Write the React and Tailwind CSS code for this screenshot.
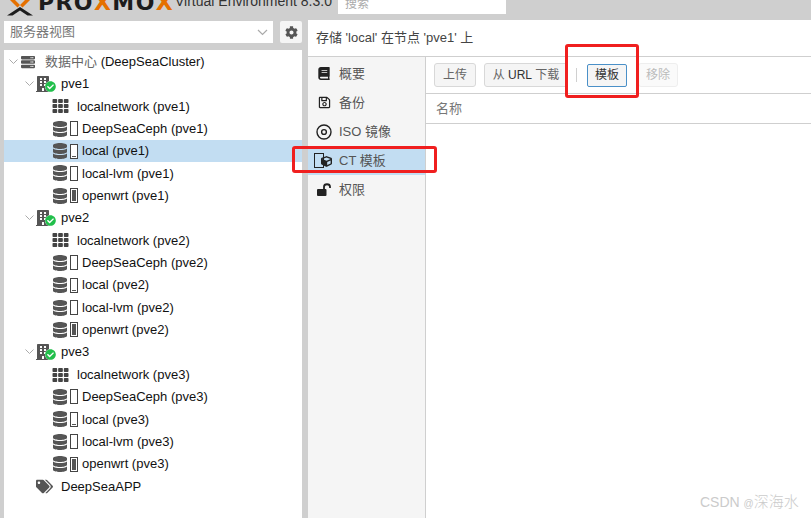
import React from "react";
import { FaBook, FaBuilding, FaCheckCircle, FaCog, FaCube, FaDatabase, FaRegSave, FaServer, FaTags, FaTh } from "react-icons/fa";

const sans = "font-['Liberation_Sans','Noto_Sans_CJK_SC',sans-serif]";

function Chevron() {
  return (
    <svg width="9" height="6" viewBox="0 0 9 6" className="shrink-0 text-[#aaa]">
      <path d="M0.5 0.5 L4.5 4.5 L8.5 0.5" fill="none" stroke="currentColor" />
    </svg>
  );
}

// level of the small bar next to the database icon, 0 = empty
function StorageRow({ label, level, selected }) {
  return (
    <div className={`flex h-[22.37px] items-center pl-[49px] ${selected ? "bg-[#c2ddf2]" : ""}`}>
      <FaDatabase className="h-[16px] w-[14px] text-[#555]" />
      <div className="ml-[3px] flex h-[15px] w-[8px] items-end border border-[#444] bg-white p-px">
        <div className={`w-full bg-[#555] ${level === 2 ? "h-full" : level === 1 ? "h-px" : "h-0"}`}></div>
      </div>
      <span className="ml-[4px] whitespace-nowrap text-[#111]">{label}</span>
    </div>
  );
}

function NetworkRow({ label }) {
  return (
    <div className="flex h-[22.37px] items-center pl-[48px]">
      <FaTh className="h-[16px] w-[17px] text-[#444]" />
      <span className="ml-[8px] whitespace-nowrap text-[#111]">{label}</span>
    </div>
  );
}

function NodeRow({ name }) {
  return (
    <div className="flex h-[22.37px] items-center pl-[21px]">
      <Chevron />
      <div className="relative ml-[2px] h-[16px] w-[20px]">
        <FaBuilding className="h-[16px] w-[14px] text-[#555]" />
        <div className="absolute left-[9px] top-[5px] h-[11px] w-[11px] rounded-full bg-white">
          <FaCheckCircle className="h-[11px] w-[11px] text-[#21bf4b]" />
        </div>
      </div>
      <span className="ml-[5px] text-[#111]">{name}</span>
    </div>
  );
}

function Node({ name, selected }) {
  return (
    <>
      <NodeRow name={name} />
      <NetworkRow label={`localnetwork (${name})`} />
      <StorageRow label={`DeepSeaCeph (${name})`} level={0} />
      <StorageRow label={`local (${name})`} level={1} selected={selected} />
      <StorageRow label={`local-lvm (${name})`} level={0} />
      <StorageRow label={`openwrt (${name})`} level={2} />
    </>
  );
}

function DiscIcon() {
  return (
    <svg width="16" height="16" viewBox="0 0 16 16" className="text-[#222]">
      <circle cx="8" cy="8" r="7" fill="none" stroke="currentColor" strokeWidth="1.4" />
      <circle cx="8" cy="8" r="2.4" fill="none" stroke="currentColor" strokeWidth="1.4" />
    </svg>
  );
}

function TemplateIcon() {
  return (
    <div className="relative h-[15px] w-[20px]">
      <div className="h-[15px] w-[10px] border border-[#222]"></div>
      <FaCube className="absolute left-[7px] top-[3px] h-[11px] w-[11px] text-[#222]" />
    </div>
  );
}

function UnlockIcon() {
  return (
    <svg width="15" height="13" viewBox="0 0 15 13" className="text-[#222]">
      <rect x="0" y="6" width="9.5" height="7" rx="1" fill="currentColor" />
      <path d="M7 6.5 V3.8 C7 0.4 13 0.4 13 3.8 V5" fill="none" stroke="currentColor" strokeWidth="1.8" />
    </svg>
  );
}

function LogoMark() {
  return (
    <svg width="30" height="16" viewBox="0 0 30 16" className="shrink-0">
      <path d="M1 -4 L6 -4 L15 5 L24 -4 L29 -4 L17.5 7.5 L15 5 L12.5 7.5 Z" fill="#e57000" />
      <path d="M2 15.5 L15 7 L28 15.5 L22.5 15.5 L15 10.5 L7.5 15.5 Z" fill="#1c1c1c" />
    </svg>
  );
}

const tabs = [
  { label: "概要", icon: <FaBook className="h-[13px] w-[14px] text-[#222]" /> },
  { label: "备份", icon: <FaRegSave className="h-[13px] w-[13px] text-[#222]" /> },
  { label: "ISO 镜像", icon: <DiscIcon /> },
  { label: "CT 模板", icon: <TemplateIcon />, active: true },
  { label: "权限", icon: <UnlockIcon /> },
];

export default function App() {
  return (
    <div className={`relative flex h-[518px] w-[811px] flex-col overflow-hidden bg-[#cfcfcf] text-[13px] ${sans}`}>
      {/* header */}
      <div className="flex h-[20px] shrink-0 items-start overflow-hidden pl-[5px]">
        <LogoMark />
        <div className="ml-[3px] mt-[-9px] flex h-[24px] w-[137px] shrink-0 items-center whitespace-nowrap font-['DejaVu_Sans'] text-[22px] font-bold leading-[24px] tracking-[1.4px] text-[#1c1c1c]">
          PRO<span className="text-[#e57000]">X</span>MO<span className="text-[#e57000]">X</span>
        </div>
        <div className="mt-[-7px] w-[163px] shrink-0 whitespace-nowrap text-[14px] leading-[16px] text-[#333]">Virtual Environment 8.3.0</div>
        <div className="h-[14px] w-[168px] overflow-hidden bg-white pl-[7px] text-[12px] leading-[9px] text-[#aaa]">搜索</div>
      </div>

      <div className="flex min-h-0 flex-1">
        {/* left side */}
        <div className="ml-[4px] flex w-[298px] shrink-0 flex-col">
          <div className="mt-px flex h-[22px] gap-[7px]">
            <div className="flex w-[269px] items-center justify-between bg-white pl-[6px] pr-[5px] text-[#777]">
              <span>服务器视图</span>
              <svg width="11" height="7" viewBox="0 0 11 7" className="text-[#aaa]">
                <path d="M1 1 L5.5 5.5 L10 1" fill="none" stroke="currentColor" strokeWidth="1.2" />
              </svg>
            </div>
            <div className="flex w-[22px] items-center justify-center rounded-[2px] bg-[#f5f5f5]">
              <FaCog className="h-[13px] w-[13px] text-[#555]" />
            </div>
          </div>
          <div className="mt-[7px] flex-1 bg-white pt-[0.4px]">
            <div className="flex h-[22.37px] items-center pl-[5px]">
              <Chevron />
              <FaServer className="ml-[2px] h-[14px] w-[16px] text-[#555]" />
              <span className="ml-[9px] whitespace-nowrap text-[#111]">
                <span className="text-[#666]">数据中心</span> (DeepSeaCluster)
              </span>
            </div>
            <Node name="pve1" selected />
            <Node name="pve2" />
            <Node name="pve3" />
            <div className="flex h-[22.37px] items-center pl-[32px]">
              <FaTags className="h-[15px] w-[17px] text-[#555]" />
              <span className="ml-[8px] text-[#111]">DeepSeaAPP</span>
            </div>
          </div>
        </div>

        {/* main panel */}
        <div className="ml-[6px] flex min-w-0 flex-1 flex-col bg-white">
          <div className="flex h-[37px] shrink-0 items-center border-b border-[#cfcfcf] pl-[8px] text-[#444]">
            存储 'local' 在节点 'pve1' 上
          </div>
          <div className="flex min-h-0 flex-1">
            <div className="w-[118px] shrink-0 border-r border-[#cfcfcf] bg-[#f5f5f5] pt-[2px]">
              {tabs.map((t) => (
                <div key={t.label} className={`flex h-[29px] items-center ${t.active ? "bg-[#c2ddf2]" : ""}`}>
                  <div className="flex w-[31px] shrink-0 justify-center pl-px">{t.icon}</div>
                  <span className="whitespace-nowrap text-[#555]">{t.label}</span>
                </div>
              ))}
            </div>
            <div className="min-w-0 flex-1">
              <div className="flex h-[37px] items-center border-b border-[#cfcfcf] pl-[8px] text-[12px] text-[#666]">
                <div className="flex h-[24px] w-[42px] items-center justify-center rounded-[3px] border border-[#d8d8d8] bg-[#f5f5f5]">上传</div>
                <div className="ml-[8px] flex h-[24px] w-[84px] items-center justify-center whitespace-nowrap rounded-[3px] border border-[#d8d8d8] bg-[#f5f5f5]">
                  从&nbsp;<span className="text-[#333]">URL</span>&nbsp;下载
                </div>
                <div className="ml-[8px] h-[14px] w-px bg-[#d0d0d0]"></div>
                <div className="ml-[10px] flex h-[23px] w-[40px] items-center justify-center rounded-[2px] border border-[#4a90c8] bg-[#f5f5f5] text-[#333]">模板</div>
                <div className="ml-[11px] flex h-[24px] w-[40px] items-center justify-center rounded-[3px] border border-[#eee] bg-[#fafafa] text-[#bbb]">移除</div>
              </div>
              <div className="flex h-[30px] items-center border-b border-[#cfcfcf] pl-[10px] text-[#777]">名称</div>
            </div>
          </div>
        </div>
      </div>

      {/* red highlight boxes drawn over the screenshot */}
      <div className="absolute left-[292px] top-[146px] h-[27px] w-[145px] rounded-[3px] border-[3px] border-[#f01f1f]"></div>
      <div className="absolute left-[565px] top-[44px] h-[54px] w-[74px] rounded-[3px] border-[3px] border-[#f01f1f]"></div>
      <div className="absolute left-[700px] top-[493px] whitespace-nowrap text-[14px] font-light leading-[18px] text-[#cbcbcb]">CSDN <span className="text-[10px]">@</span><span className="text-[15px]">深海水</span></div>
    </div>
  );
}
